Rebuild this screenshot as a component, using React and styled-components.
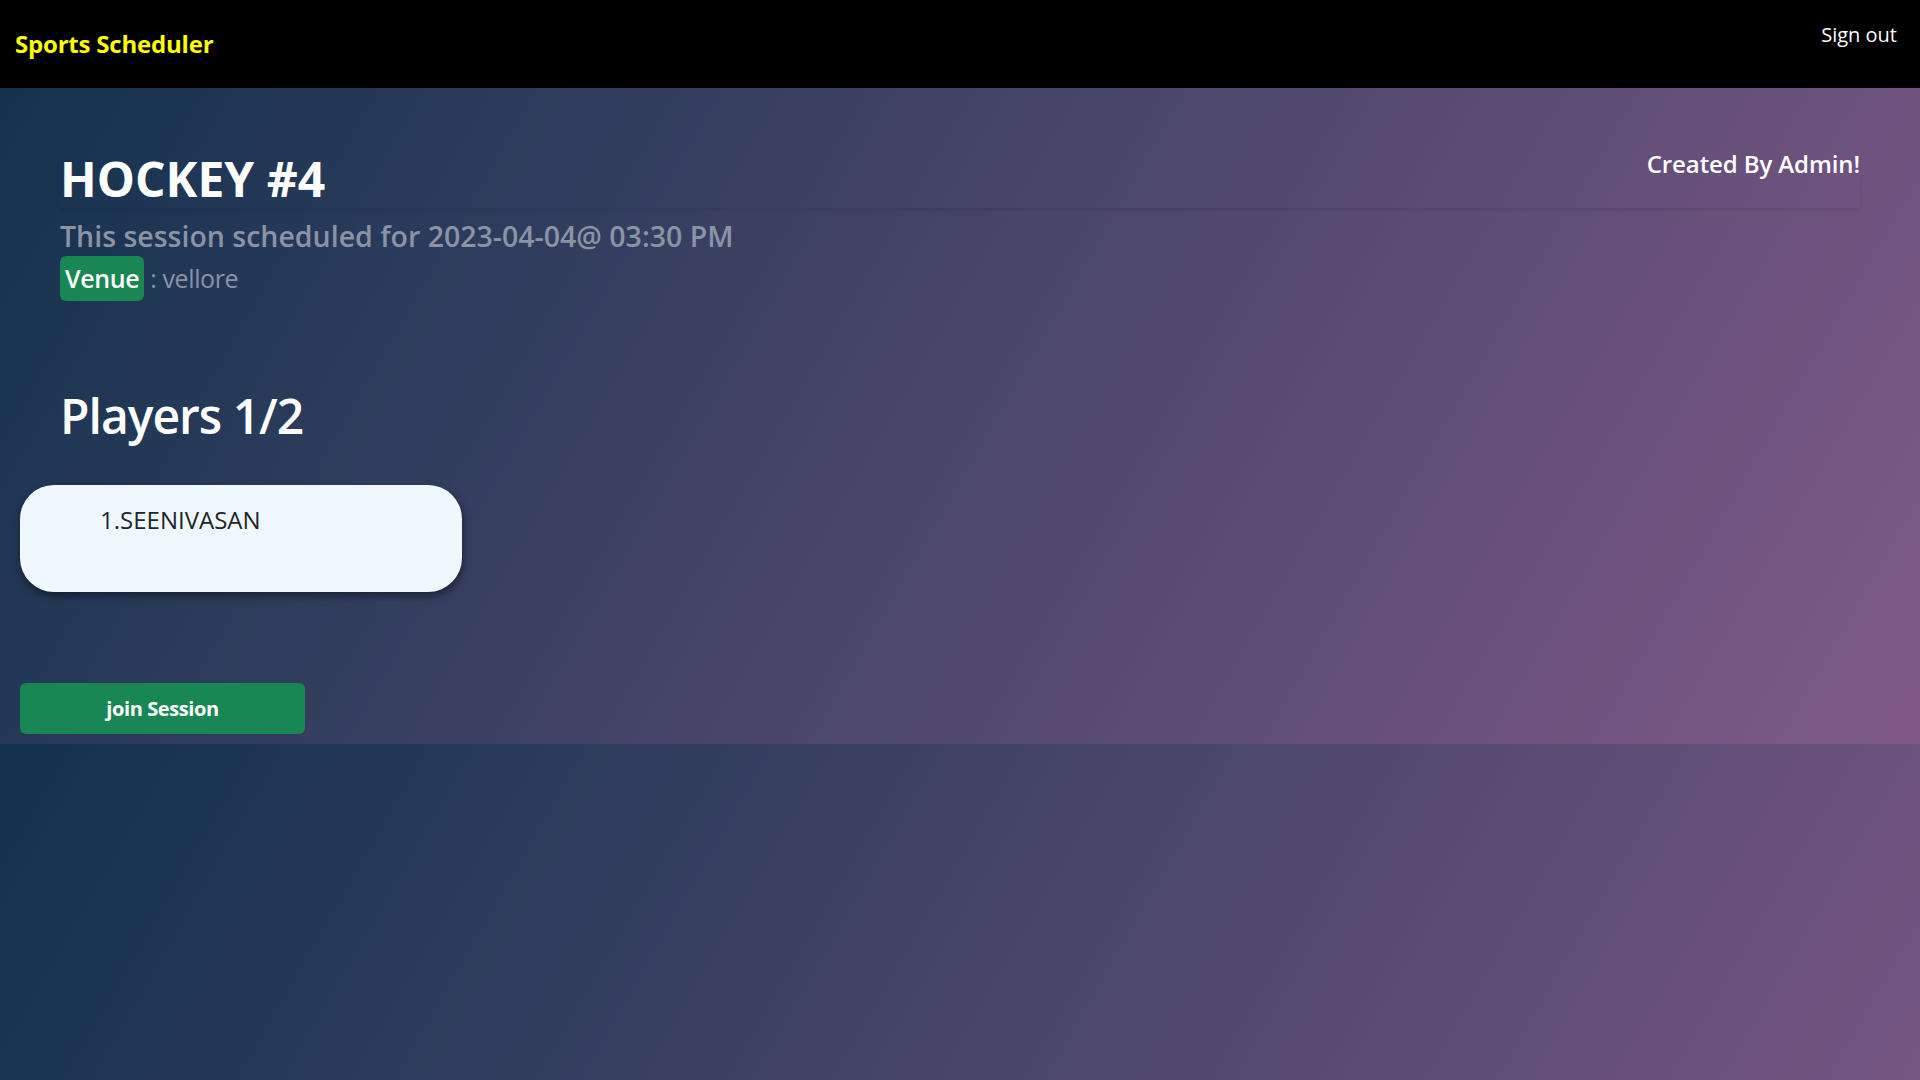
import React from 'react'
import styled, { createGlobalStyle } from 'styled-components'

const GlobalStyle = createGlobalStyle`
  html, body {
    margin: 0;
    padding: 0;
  }
  body {
    font-family: "Open Sans", "Noto Sans", sans-serif;
    color: #ffffff;
    background: linear-gradient(120deg, #11314d, #805a87);
  }
  * { box-sizing: border-box; }
`

const players = ['SEENIVASAN']

function App() {
  return (
    <>
      <GlobalStyle />
      <NavBar>
        <Brand>Sports Scheduler</Brand>
        <SignOut href="#">Sign out</SignOut>
      </NavBar>

      <Main>
        {/* session info */}
        <Info>
          <TitleRow>
            <Title>HOCKEY #4</Title>
            <CreatedBy>Created By Admin!</CreatedBy>
          </TitleRow>
          <Schedule>This session scheduled for 2023-04-04@ 03:30 PM</Schedule>
          <VenueLine>
            <Badge>Venue</Badge> : vellore
          </VenueLine>
          <PlayersTitle>Players 1/{2}</PlayersTitle>
        </Info>

        {/* player list */}
        <PlayerCard>
          {players.map((p, i) => (
            <PlayerName key={p}>{i + 1}.{p}</PlayerName>
          ))}
        </PlayerCard>

        <JoinButton>join Session</JoinButton>
      </Main>
    </>
  )
}

export default App

const NavBar = styled.nav`
  display: flex;
  justify-content: space-between;
  align-items: flex-start;
  height: 88px;
  padding: 0 23px 0 15px;
  background: #000000;
`

const Brand = styled.a`
  font-size: 24px;
  font-weight: 700;
  line-height: 88px;
  color: #ffff00;
  letter-spacing: -0.2px;
`

const SignOut = styled.a`
  margin-top: 20px;
  font-size: 20px;
  line-height: 30px;
  color: #ffffff;
  text-decoration: none;
`

const Main = styled.main`
  padding: 0 20px 10px;
`

const Info = styled.section`
  padding: 62px 40px 0;
`

const TitleRow = styled.div`
  display: flex;
  justify-content: space-between;
  align-items: flex-start;
  box-shadow: 0 3px 4px -1px rgba(0, 0, 0, 0.1);
`

const Title = styled.h1`
  margin: 0;
  font-size: 48px;
  font-weight: 700;
  line-height: 1.2;
`

const CreatedBy = styled.h4`
  margin: 0;
  font-size: 24px;
  font-weight: 600;
  line-height: 1.2;
  letter-spacing: -0.1px;
`

const Schedule = styled.h3`
  margin: 12px 0 0;
  font-size: 28.5px;
  font-weight: 600;
  line-height: 33.6px;
  color: #8b93a5;
`

const VenueLine = styled.div`
  margin-top: 3px;
  font-size: 25px;
  font-weight: 500;
  line-height: 45px;
  color: #8b93a5;
  letter-spacing: -0.4px;
`

const Badge = styled.span`
  display: inline-block;
  padding: 0 5px;
  border-radius: 6px;
  background: #198754;
  color: #ffffff;
  font-weight: 600;
`

const PlayersTitle = styled.h2`
  margin: 86px 0 0;
  font-size: 48px;
  font-weight: 600;
  line-height: 1.2;
  letter-spacing: -1px;
`

const PlayerCard = styled.ul`
  list-style: none;
  width: 442px;
  height: 107px;
  margin: 40px 0 0;
  padding: 17px 20px 0 80px;
  border-radius: 34px;
  background: #f0f8ff;
  box-shadow: 1px 4px 8px rgba(0, 0, 0, 0.45);
`

const PlayerName = styled.li`
  font-size: 24px;
  line-height: 36px;
  color: #212529;
`

const JoinButton = styled.button`
  display: block;
  width: 285px;
  height: 51px;
  margin-top: 91px;
  border: none;
  border-radius: 6px;
  background: #198754;
  color: #ffffff;
  font-family: "Open Sans", sans-serif;
  font-size: 20px;
  font-weight: 700;
  letter-spacing: -0.4px;
  cursor: pointer;
`
